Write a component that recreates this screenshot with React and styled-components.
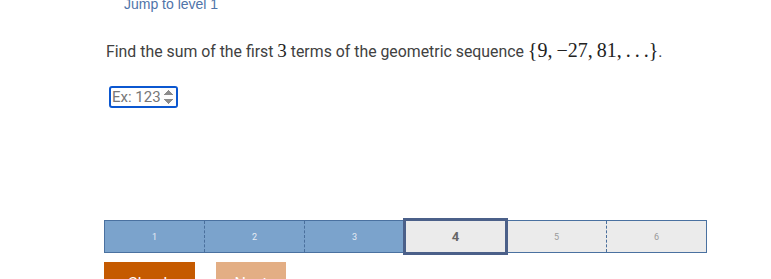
import React from "react";
import styled, { createGlobalStyle } from "styled-components";

const Global = createGlobalStyle`
  html, body { margin: 0; padding: 0; background: #fff; }
  body { font-family: Roboto, "Liberation Sans", sans-serif; overflow: hidden; }
`;

const Page = styled.div`
  width: 771px;
  height: 279px;
  overflow: hidden;
  padding: 0 64px 0 104px;
  box-sizing: border-box;
`;

const JumpLink = styled.a`
  display: block;
  margin: -4px 0 0 20px;
  font-family: "Liberation Sans", Arial, sans-serif;
  font-size: 14px;
  line-height: 16px;
  color: #4f74a9;
  text-decoration: none;
`;

const Question = styled.p`
  margin: 26px 0 0 2px;
  font-size: 15.85px;
  line-height: 24px;
  color: #414141;
`;

const MathNum = styled.span`
  font-family: "Liberation Serif", "DejaVu Serif", serif;
  font-size: 19px;
  color: #222;
`;

const MathSet = styled.span`
  font-family: "Liberation Serif", "DejaVu Serif", serif;
  font-size: 20px;
  color: #222;
`;

const Input = styled.input`
  display: block;
  margin: 22px 0 0 5px;
  width: 69px;
  height: 22px;
  box-sizing: border-box;
  border: 2px solid #0b57d0;
  border-radius: 3px;
  padding: 0 0 0 1px;
  font-family: Roboto, sans-serif;
  font-size: 15px;
  color: #333;
  outline: none;
  &::placeholder { color: #777; }
  &::-webkit-inner-spin-button,
  &::-webkit-outer-spin-button {
    opacity: 1;
  }
`;

const Bar = styled.div`
  display: flex;
  margin-top: 112px;
  height: 33px;
  border: 1px solid #4a71a0;
  box-sizing: border-box;
`;

const Segment = styled.div`
  flex: 1;
  display: flex;
  align-items: center;
  justify-content: center;
  font-family: Roboto, sans-serif;
  font-size: ${(p) => (p.$active ? "13px" : "9px")};
  font-weight: ${(p) => (p.$active ? "bold" : "normal")};
  color: ${(p) => (p.$active ? "#666" : p.$done ? "#e6ecf4" : "#9a9a9a")};
  background: ${(p) => (p.$done ? "#7ba3cc" : "#ebebeb")};
  border-left: ${(p) => (p.$first ? "none" : "1px dashed #4a6f9c")};
  ${(p) =>
    p.$active &&
    `
    border: 3px solid #4b6089;
    margin: -3px -1px -3px -1px;
    position: relative;
    z-index: 1;
  `}
  ${(p) => p.$afterActive && `border-left: none;`}
`;

const Buttons = styled.div`
  display: flex;
  gap: 21px;
  margin-top: 9px;
`;

const Button = styled.button`
  height: 36px;
  border: none;
  padding: 0;
  width: ${(p) => p.$w}px;
  background: ${(p) => (p.$disabled ? "#e3ae84" : "#c55a00")};
  color: #fff;
  font-family: Roboto, sans-serif;
  font-size: 16px;
  padding-top: 6px;
`;

export default function App() {
  const segs = [1, 2, 3, 4, 5, 6];
  return (
    <>
      <Global />
      <Page>
        <JumpLink href="#">Jump to level 1</JumpLink>
        <Question>
          Find the sum of the first <MathNum>3</MathNum> terms of the geometric sequence{" "}
          <MathSet>{"{9,\u2009\u221227,\u200981,\u2009.\u2009.\u2009.}"}</MathSet>.
        </Question>
        <Input type="number" placeholder="Ex: 123" />
        <Bar>
          {segs.map((n) => (
            <Segment
              key={n}
              $first={n === 1}
              $done={n < 4}
              $active={n === 4}
              $afterActive={n === 5}
            >
              {n}
            </Segment>
          ))}
        </Bar>
        <Buttons>
          <Button $w={91}>Check</Button>
          <Button $w={70} $disabled>Next</Button>
        </Buttons>
      </Page>
    </>
  );
}
